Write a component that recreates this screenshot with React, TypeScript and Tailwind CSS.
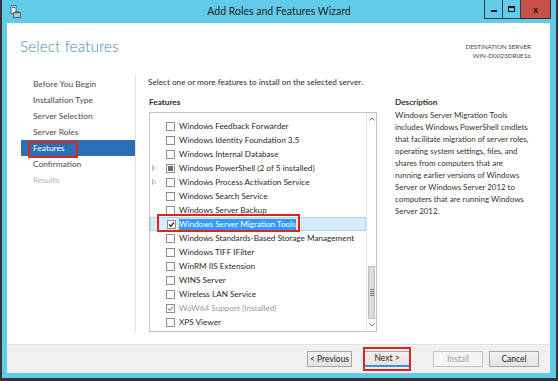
import React from 'react';

type Row = {
  t: string;
  exp?: boolean;
  state?: 'checked' | 'partial';
  selected?: boolean;
  disabled?: boolean;
};

const rows: Row[] = [
  { t: 'Windows Feedback Forwarder' },
  { t: 'Windows Identity Foundation 3.5' },
  { t: 'Windows Internal Database' },
  { t: 'Windows PowerShell (2 of 5 installed)', exp: true, state: 'partial' },
  { t: 'Windows Process Activation Service', exp: true },
  { t: 'Windows Search Service' },
  { t: 'Windows Server Backup' },
  { t: 'Windows Server Migration Tools', state: 'checked', selected: true },
  { t: 'Windows Standards-Based Storage Management' },
  { t: 'Windows TIFF IFilter' },
  { t: 'WinRM IIS Extension' },
  { t: 'WINS Server' },
  { t: 'Wireless LAN Service' },
  { t: 'WoW64 Support (Installed)', state: 'checked', disabled: true },
  { t: 'XPS Viewer' },
];

const nav = [
  'Before You Begin',
  'Installation Type',
  'Server Selection',
  'Server Roles',
  'Features',
  'Confirmation',
  'Results',
];

const descLines = [
  'Windows Server Migration Tools',
  'includes Windows PowerShell cmdlets',
  'that facilitate migration of server roles,',
  'operating system settings, files, and',
  'shares from computers that are',
  'running earlier versions of Windows',
  'Server or Windows Server 2012 to',
  'computers that are running Windows',
  'Server 2012.',
];

const Check: React.FC<{ row: Row }> = ({ row }) => (
  <div className="w-[9px] h-[9px] border border-[#8e8e8e] bg-white flex items-center justify-center shrink-0">
    {row.state === 'partial' && <div className="w-[5px] h-[5px] bg-[#6d6d6d]" />}
    {row.state === 'checked' && (
      <svg width="7" height="7" viewBox="0 0 7 7">
        <path d="M1 3.5 L2.8 5.3 L6 1.5" fill="none" stroke={row.disabled ? '#9a9a9a' : '#222'} strokeWidth="1.3" />
      </svg>
    )}
  </div>
);

const Btn: React.FC<{ label: string; cls?: string; disabled?: boolean; focus?: boolean }> = ({ label, cls, disabled, focus }) => (
  <div
    className={`h-[16px] flex items-center justify-center text-[8.5px] border ${
      disabled ? 'border-[#c6c6c6] bg-[#f4f4f4] text-[#a3a3a3]' : 'border-[#a8a8a8] bg-gradient-to-b from-[#f2f2f2] to-[#e3e3e3] text-[#222]'
    } ${focus ? 'border-b-[#3d8fd6] border-b-2' : ''} ${cls ?? ''}`}
  >
    {label}
  </div>
);

export default function App() {
  return (
    <div
      className="w-[558px] h-[381px] bg-[#62cbea] border-x-2 border-b-[3px] border-[#353535] flex flex-col overflow-hidden"
      style={{ fontFamily: 'Lato, "Noto Sans", sans-serif' }}
    >
      {/* Title bar */}
      <div className="h-[23px] relative flex items-center justify-center shrink-0">
        <svg className="absolute left-[8px] top-[5px]" width="11" height="13" viewBox="0 0 11 13">
          <rect x="1" y="0.5" width="5" height="8" fill="#e9f3fb" stroke="#2f6c9e" />
          <rect x="2" y="2" width="3" height="1" fill="#2f6c9e" />
          <rect x="3.5" y="7.5" width="7" height="5" fill="#b9c4cc" stroke="#5a6670" />
          <rect x="5.5" y="6.5" width="3" height="1.5" fill="none" stroke="#5a6670" strokeWidth="0.8" />
        </svg>
        <span className="text-[10.5px] text-[#1e1e1e]">Add Roles and Features Wizard</span>
        <div className="absolute right-[5px] top-0 flex h-[19px]">
          <div className="w-[19px] h-full border border-[#2a3d45] border-t-0 flex items-center justify-center">
            <div className="w-[6px] h-[2px] bg-[#111] mt-[4px]" />
          </div>
          <div className="w-[18px] h-full border border-[#2a3d45] border-t-0 border-l-0 flex items-center justify-center">
            <div className="w-[7px] h-[6px] border-[1.5px] border-t-[2px] border-[#111]" />
          </div>
          <div className="w-[30px] h-full bg-[#c7504b] border border-[#3a2a2a] border-t-0 border-l-0 flex items-center justify-center">
            <span className="text-[9px] font-bold text-[#111] leading-none">x</span>
          </div>
        </div>
      </div>

      {/* Content */}
      <div className="flex-1 ml-[5px] mr-[6px] mb-[5px] bg-white flex flex-col">
        {/* Header */}
        <div className="h-[52px] flex justify-between shrink-0">
          <div className="pl-[13px] pt-[16px] text-[15.5px] font-light text-[#4a8cb8] leading-none">Select features</div>
          <div className="pr-[19px] pt-[19px] text-right text-[6.3px] leading-[9px] text-[#444]">
            <div>DESTINATION SERVER</div>
            <div>WIN-D0023DR0E16</div>
          </div>
        </div>

        {/* Main */}
        <div className="flex-1 flex">
          <div className="w-[129px] border-r border-[#e2e2e2] mb-[12px] pt-[1px] pl-[14px] shrink-0">
            {nav.map((n) => {
              const sel = n === 'Features';
              return (
                <div
                  key={n}
                  className={`h-[16px] flex items-center pl-[12px] text-[8.4px] relative ${
                    sel ? 'bg-[#2b6fb6] text-white' : n === 'Results' ? 'text-[#b4b4b4]' : 'text-[#4a4a4a]'
                  }`}
                >
                  {n}
                  {sel && <div className="absolute left-[7px] top-[1px] w-[50px] h-[17px] border-2 border-[#e0241c]" />}
                </div>
              );
            })}
          </div>

          <div className="flex-1 pl-[12px] pt-[1px] text-[#2a2a2a]">
            <div className="h-[12px] flex items-center text-[8.2px]">Select one or more features to install on the selected server.</div>
            <div className="flex mt-[8px]">
              <div className="w-[229px] shrink-0">
                <div className="h-[12px] flex items-center pl-[1px] text-[8.2px] font-bold">Features</div>
                <div className="mt-[4px] ml-[1px] h-[220px] border border-[#c4c4c4] flex">
                  <div className="flex-1 pt-[6px]">
                    {rows.map((r) => (
                      <div
                        key={r.t}
                        className={`h-[14px] flex items-center pl-[2px] relative ${
                          r.selected ? 'bg-[#d6ebfd] border border-[#a7d3f6]' : ''
                        }`}
                      >
                        <div className="w-[12px] flex items-center">
                          {r.exp && (
                            <svg width="4" height="6" viewBox="0 0 4 6">
                              <path d="M0.5 0.5 L3.5 3 L0.5 5.5 Z" fill="none" stroke="#a6a6a6" strokeWidth="0.8" />
                            </svg>
                          )}
                        </div>
                        <div className="ml-[2px]">
                          <Check row={r} />
                        </div>
                        <span
                          className={`text-[8.2px] whitespace-nowrap leading-[11px] ${
                            r.selected ? 'bg-[#3399ff] text-white ml-[3px]' : r.disabled ? 'text-[#9a9a9a] ml-[4px]' : 'text-[#2a2a2a] ml-[4px]'
                          }`}
                        >
                          {r.t}
                        </span>
                        {r.selected && <div className="absolute left-[6px] -top-[4px] w-[143px] h-[18px] border-2 border-[#e0241c]" />}
                      </div>
                    ))}
                  </div>
                  <div className="w-[10px] border-l border-[#e4e4e4] flex flex-col shrink-0">
                    <div className="h-[12px] flex items-center justify-center">
                      <svg width="6" height="4" viewBox="0 0 6 4">
                        <path d="M0.5 3.5 L3 1 L5.5 3.5" fill="none" stroke="#666" strokeWidth="0.9" />
                      </svg>
                    </div>
                    <div className="flex-1" />
                    <div className="h-[53px] mx-[1px] bg-[#dcdcdc] border border-[#bdbdbd] flex items-center justify-center">
                      <div className="flex flex-col gap-[1px]">
                        <div className="w-[4px] h-[1px] bg-[#777]" />
                        <div className="w-[4px] h-[1px] bg-[#777]" />
                        <div className="w-[4px] h-[1px] bg-[#777]" />
                        <div className="w-[4px] h-[1px] bg-[#777]" />
                      </div>
                    </div>
                    <div className="h-[12px] flex items-center justify-center">
                      <svg width="6" height="4" viewBox="0 0 6 4">
                        <path d="M0.5 0.5 L3 3 L5.5 0.5" fill="none" stroke="#666" strokeWidth="0.9" />
                      </svg>
                    </div>
                  </div>
                </div>
              </div>
              <div className="ml-[18px] text-[#333]">
                <div className="h-[12px] flex items-center text-[8.2px] font-bold">Description</div>
                <div className="mt-[1px] text-[7.9px] leading-[12px] whitespace-nowrap">
                  {descLines.map((l) => (
                    <div key={l}>{l}</div>
                  ))}
                </div>
              </div>
            </div>
          </div>
        </div>

        {/* Footer */}
        <div className="h-[29px] bg-[#f0f0f0] border-t border-[#e3e3e3] flex items-center justify-end pr-[11px] shrink-0">
          <Btn label="< Previous" cls="w-[45px]" />
          <div className="relative ml-[12px]">
            <Btn label="Next >" cls="w-[46px]" focus />
            <div className="absolute -left-[1px] -top-[4px] w-[48px] h-[24px] border-2 border-[#e0241c]" />
          </div>
          <Btn label="Install" cls="w-[50px] ml-[23px]" disabled />
          <Btn label="Cancel" cls="w-[50px] ml-[6px]" />
        </div>
      </div>
    </div>
  );
}
